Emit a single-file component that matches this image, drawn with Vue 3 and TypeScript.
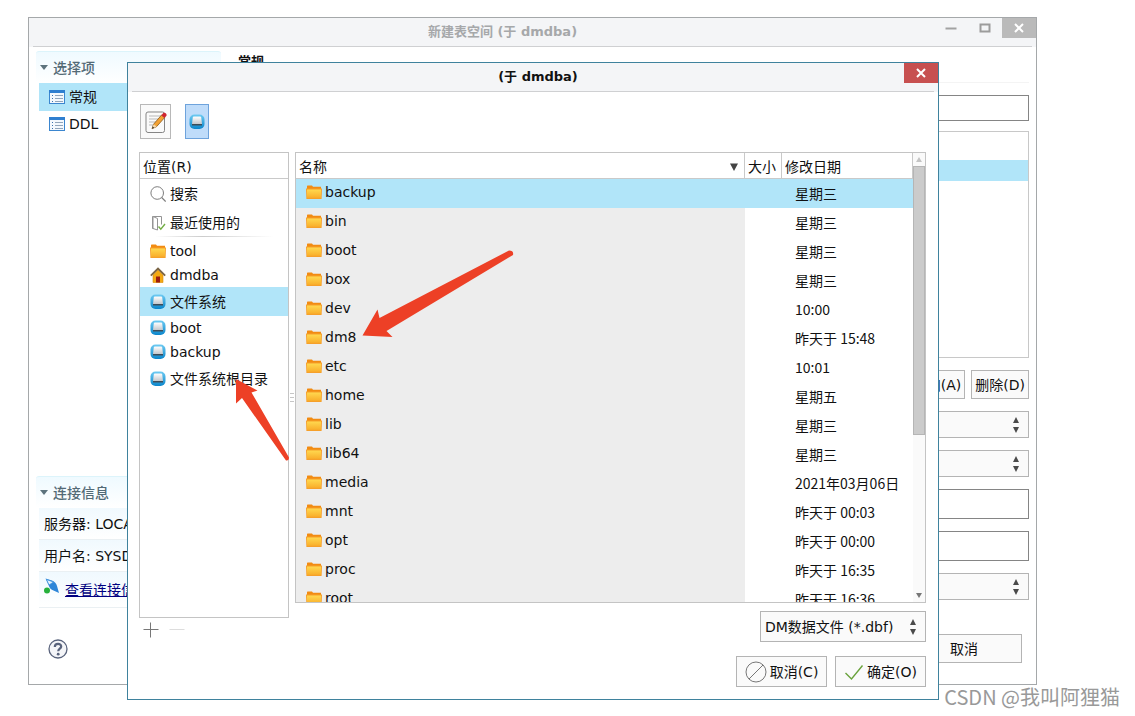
<script setup lang="ts">
import { ref } from 'vue'

interface Place {
  name: string
  icon: 'search' | 'recent' | 'folder' | 'home' | 'disk'
  tall: boolean
}

interface Entry {
  name: string
  modified: string
}

const pages = ['常规', 'DDL']
const currentPage = ref('常规')

const places: Place[] = [
  { name: '搜索', icon: 'search', tall: true },
  { name: '最近使用的', icon: 'recent', tall: true },
  { name: 'tool', icon: 'folder', tall: false },
  { name: 'dmdba', icon: 'home', tall: false },
  { name: '文件系统', icon: 'disk', tall: true },
  { name: 'boot', icon: 'disk', tall: false },
  { name: 'backup', icon: 'disk', tall: false },
  { name: '文件系统根目录', icon: 'disk', tall: true },
]
const currentPlace = ref('文件系统')

const entries: Entry[] = [
  { name: 'backup', modified: '星期三' },
  { name: 'bin', modified: '星期三' },
  { name: 'boot', modified: '星期三' },
  { name: 'box', modified: '星期三' },
  { name: 'dev', modified: '10:00' },
  { name: 'dm8', modified: '昨天于 15:48' },
  { name: 'etc', modified: '10:01' },
  { name: 'home', modified: '星期五' },
  { name: 'lib', modified: '星期三' },
  { name: 'lib64', modified: '星期三' },
  { name: 'media', modified: '2021年03月06日' },
  { name: 'mnt', modified: '昨天于 00:03' },
  { name: 'opt', modified: '昨天于 00:00' },
  { name: 'proc', modified: '昨天于 16:35' },
  { name: 'root', modified: '昨天于 16:36' },
]
const currentEntry = ref('backup')
</script>

<template>
  <div class="desktop">
    <svg class="defs" width="0" height="0" aria-hidden="true">
      <defs>
        <linearGradient id="gFolder" x1="0" y1="0" x2="0" y2="1">
          <stop offset="0" stop-color="#ffd84f" />
          <stop offset="1" stop-color="#f9ae2b" />
        </linearGradient>
        <linearGradient id="gDisk" x1="0" y1="0" x2="0" y2="1">
          <stop offset="0" stop-color="#6fcbf2" />
          <stop offset="1" stop-color="#0a86cc" />
        </linearGradient>
        <linearGradient id="gPlate" x1="0" y1="0" x2="0" y2="1">
          <stop offset="0" stop-color="#ffffff" />
          <stop offset="1" stop-color="#c3c7cc" />
        </linearGradient>
        <symbol id="folder" viewBox="0 0 16 14">
          <path d="M1 5V1.200Q1 .5 1.700.5H6l1 1.300h8V5z" fill="#f28b12" />
          <path d="M0 3.500h16l-.4 10.500H.4z" fill="#f6a02a" />
          <path d="M1 4.500h14v8.300H1z" fill="url(#gFolder)" />
        </symbol>
        <symbol id="disk" viewBox="0 0 16 16">
          <rect x="0.500" y="0.500" width="15" height="14.500" rx="5" fill="url(#gDisk)" />
          <path d="M4.800 2.500h6.400q.8 0 1 .8L13 10H3l.8-6.700q.2-.8 1-.8z" fill="url(#gPlate)" />
          <path d="M3 10h10v1.500H3z" fill="#3c4c58" />
        </symbol>
        <symbol id="home" viewBox="0 0 16 16">
          <path d="M3 8l5-5 5 5v7.500H3z" fill="#f3a913" stroke="#d98c0a" stroke-width="0.600" />
          <path d="M6 9.500h4v6H6z" fill="#9c1c10" />
          <path d="M0.800 8.700L8 1.600l7.200 7.100" fill="none" stroke="#7a6546" stroke-width="1.800" />
        </symbol>
        <symbol id="search" viewBox="0 0 16 16">
          <circle cx="7.200" cy="7" r="6.300" fill="none" stroke="#7d7d7d" />
          <path d="M11.700 11.500l4 4" stroke="#7d7d7d" stroke-width="1.200" />
        </symbol>
        <symbol id="recent" viewBox="0 0 16 16">
          <path d="M2.500 1.500h9v8M2.500 1.500v12h3" fill="none" stroke="#949494" />
          <path d="M3 1.500l4.500 2v11.500L3 13.500z" fill="#fff" stroke="#949494" />
          <path d="M8.500 11.500l2.300 2.700 4.200-5.200" fill="none" stroke="#74ad45" stroke-width="1.400" />
        </symbol>
        <symbol id="page" viewBox="0 0 16 14">
          <rect x="0.500" y="0.500" width="15" height="13" fill="#f4f8fd" stroke="#3b86cf" />
          <path d="M0 0h16v3H0z" fill="#2f7fd0" />
          <path d="M3 5.500h1M3 8.500h1M3 11.500h1" stroke="#3b72ad" />
          <path d="M6 5.500h8M6 8.500h8M6 11.500h8" stroke="#91a5bb" />
        </symbol>
        <symbol id="spin" viewBox="0 0 8 18">
          <path d="M4 1l3 6H1zM4 17l3-6H1z" fill="#4a4a4a" />
        </symbol>
      </defs>
    </svg>

    <section class="window parent" aria-label="新建表空间">
      <header class="titlebar">
        <h1 class="title dim">新建表空间 (于 dmdba)</h1>
        <div class="controls">
          <button class="ctl" type="button" aria-label="最小化">
            <svg width="12" height="12" viewBox="0 0 12 12"><path d="M0.500 6.500h11" stroke="#a2a2a2" stroke-width="2" /></svg>
          </button>
          <button class="ctl" type="button" aria-label="最大化">
            <svg width="12" height="12" viewBox="0 0 12 12"><rect x="1.500" y="2.500" width="9" height="7" fill="none" stroke="#9c9c9c" stroke-width="2" /></svg>
          </button>
          <button class="ctl shut" type="button" aria-label="关闭">
            <svg width="10" height="10" viewBox="0 0 10 10"><path d="M1 1l8 8M9 1L1 9" stroke="#fff" stroke-width="2" /></svg>
          </button>
        </div>
      </header>

      <div class="parent-body">
        <aside class="sidebar">
          <nav>
            <h2 class="group"><svg width="8" height="5" viewBox="0 0 8 5"><path d="M0 0h8L4 5z" fill="#5d737d" /></svg>选择项</h2>
            <button
              v-for="page in pages"
              :key="page"
              type="button"
              class="page"
              :class="{ active: page === currentPage }"
              @click="currentPage = page"
            >
              <svg width="16" height="14"><use href="#page" /></svg>{{ page }}
            </button>
          </nav>
          <div class="connection">
            <h2 class="group"><svg width="8" height="5" viewBox="0 0 8 5"><path d="M0 0h8L4 5z" fill="#5d737d" /></svg>连接信息</h2>
            <p class="info">服务器: LOCALHOST</p>
            <p class="info">用户名: SYSDBA</p>
            <p class="info link">
              <svg width="16" height="16" viewBox="0 0 16 16">
                <path d="M1.500 .5L8 2.500q4 1.500 5 5.500l2 7-5.500-2.500Q6 11.500 4.500 7z" fill="#2e86d8" />
                <path d="M2.500 1.500l2.500 5.500 4.500-3z" fill="#e6f2fc" stroke="#3e92dc" stroke-width="0.800" />
                <circle cx="3" cy="12.500" r="3" fill="#25b03c" />
              </svg>
              <a href="#connection">查看连接信息</a>
            </p>
          </div>
        </aside>

        <form class="settings" @submit.prevent>
          <h2 class="heading">常规</h2>
          <input class="field" type="text" aria-label="表空间名" />
          <div class="grid-box"><div class="grid-row"></div></div>
          <div class="row-actions">
            <button class="btn" type="button">添加(A)</button>
            <button class="btn" type="button">删除(D)</button>
          </div>
          <span class="pick"><select aria-label="缓冲区"><option></option></select><svg width="8" height="18"><use href="#spin" /></svg></span>
          <span class="pick"><select aria-label="加密算法"><option></option></select><svg width="8" height="18"><use href="#spin" /></svg></span>
          <input class="field tall" type="password" aria-label="密码" />
          <input class="field tall" type="text" aria-label="副本数" />
          <span class="pick"><select aria-label="区块策略"><option></option></select><svg width="8" height="18"><use href="#spin" /></svg></span>
        </form>
      </div>

      <footer class="parent-foot">
        <button class="help" type="button" aria-label="帮助">
          <svg width="20" height="20" viewBox="0 0 20 20">
            <circle cx="10" cy="10" r="9" fill="#f4f5f8" stroke="#59637c" stroke-width="1.300" />
            <path d="M6.800 8c0-4.200 6.600-4 6.400-.4-.1 2-3 2.200-3 4.600" fill="none" stroke="#59637c" stroke-width="2.200" />
            <circle cx="10.200" cy="15.200" r="1.400" fill="#59637c" />
          </svg>
        </button>
        <button class="btn wide" type="button">取消</button>
      </footer>
    </section>

    <section class="window dialog" role="dialog" aria-label="选择文件">
      <header class="titlebar">
        <h1 class="title">(于 dmdba)</h1>
        <div class="controls">
          <button class="ctl red" type="button" aria-label="关闭对话框">
            <svg width="10" height="10" viewBox="0 0 10 10"><path d="M1 1l8 8M9 1L1 9" stroke="#fff" stroke-width="2" /></svg>
          </button>
        </div>
      </header>

      <div class="toolbar">
        <button class="tool" type="button" aria-label="输入文件名">
          <svg width="24" height="24" viewBox="0 0 24 24">
            <rect x="2" y="2" width="18.500" height="20.500" rx="2" fill="#fafafa" stroke="#858585" />
            <path d="M5 6h12M5 9h9M5 12h7M5 15h5" stroke="#b9b9b9" />
            <path d="M8 18.800l1.600-4.600L17.600 5l3 2.600-8 9z" fill="#f3a233" stroke="#8a5512" stroke-width="0.800" />
            <path d="M8 18.800l1.600-4.600 3 2.400z" fill="#f4d9ac" />
            <path d="M8 18.800l.7-2.200 1.400 1.200z" fill="#222" />
            <path d="M17.300 5.300l2-2.300c1.600-1 4 1 3.200 2.700l-2 2.300z" fill="#cf2530" />
          </svg>
        </button>
        <button class="tool pressed" type="button" aria-label="文件系统位置">
          <svg width="16" height="16"><use href="#disk" /></svg>
        </button>
      </div>

      <div class="panes">
        <div class="left">
          <div class="places">
            <h2 class="places-head">位置(R)</h2>
            <ul>
              <li v-for="place in places" :key="place.name">
                <button
                  type="button"
                  class="place"
                  :class="{ tall: place.tall, active: place.name === currentPlace, ruled: place.icon === 'recent' }"
                  @click="currentPlace = place.name"
                >
                  <svg width="16" height="16"><use :href="'#' + place.icon" /></svg>{{ place.name }}
                </button>
              </li>
            </ul>
          </div>
          <div class="place-tools">
            <button type="button" aria-label="添加书签"><svg width="16" height="16" viewBox="0 0 16 16"><path d="M0.500 7.500h15M7.500 0.500v15" stroke="#777" /></svg></button>
            <button type="button" aria-label="移除书签"><svg width="16" height="16" viewBox="0 0 16 16"><path d="M0.500 7.500h15" stroke="#ddd" /></svg></button>
          </div>
        </div>

        <div class="grip" aria-hidden="true"><i></i><i></i><i></i></div>

        <div class="right">
          <div class="files">
            <div class="viewport">
              <table>
                <thead>
                  <tr>
                    <th class="c-name" scope="col">
                      <span class="sort">名称<svg width="8" height="8" viewBox="0 0 8 8"><path d="M0 0.500h8L4 8z" fill="#444" /></svg></span>
                    </th>
                    <th class="c-size" scope="col">大小</th>
                    <th class="c-date" scope="col">修改日期</th>
                  </tr>
                </thead>
                <tbody>
                  <tr
                    v-for="entry in entries"
                    :key="entry.name"
                    :class="{ active: entry.name === currentEntry }"
                    @click="currentEntry = entry.name"
                  >
                    <td class="name"><span><svg width="16" height="14"><use href="#folder" /></svg>{{ entry.name }}</span></td>
                    <td></td>
                    <td class="date">{{ entry.modified }}</td>
                  </tr>
                </tbody>
              </table>
            </div>
            <div class="scroll" aria-hidden="true">
              <svg width="12" height="13" viewBox="0 0 12 13"><path d="M6 4l3 5H3z" fill="#c4c4c4" /></svg>
              <div class="thumb"></div>
              <svg width="12" height="13" viewBox="0 0 12 13"><path d="M6 9l3-5H3z" fill="#777" /></svg>
            </div>
          </div>
          <span class="pick filter">
            <select aria-label="文件类型"><option>DM数据文件 (*.dbf)</option></select>
            <svg width="8" height="18"><use href="#spin" /></svg>
          </span>
        </div>
      </div>

      <footer class="actions">
        <button class="btn icon" type="button">
          <svg width="22" height="22" viewBox="0 0 22 22"><circle cx="11" cy="11" r="10" fill="none" stroke="#777" /><path d="M4 18L18 4" stroke="#777" /></svg>取消(C)
        </button>
        <button class="btn icon" type="button">
          <svg width="20" height="20" viewBox="0 0 20 20"><path d="M1.500 11l6 6L18.500 3.500" fill="none" stroke="#69a23c" stroke-width="1.400" /></svg>确定(O)
        </button>
      </footer>
    </section>

    <svg class="marks" width="520" height="470" viewBox="0 0 520 470" aria-hidden="true">
      <path d="M362.500 335.500L377.500 309.500L379.500 318L509 250.500Q514 250.500 513 255L386.500 331L392.500 337z" fill="#ed4026" />
      <path d="M236 379L257.500 390.500L251.500 392.500L289 457.500Q289 461 286 460.500L242 398L236 403.500z" fill="#ed4026" />
    </svg>

    <p class="watermark">CSDN @我叫阿狸猫</p>
  </div>
</template>

<style>
body {
  background: #fff;
}
</style>

<style scoped>
.desktop {
  position: relative;
  min-height: 100vh;
  overflow: hidden;
  background: #fff;
  color: #111;
  font: 14px/20px "DejaVu Sans", "Noto Sans CJK SC", sans-serif;
}
.desktop * {
  box-sizing: border-box;
}
.defs {
  position: absolute;
}
h1, h2, p, ul {
  margin: 0;
  padding: 0;
}
ul {
  list-style: none;
}
button, input, select {
  margin: 0;
  padding: 0;
  border: 0;
  border-radius: 0;
  background: none;
  color: inherit;
  font: inherit;
}
svg {
  flex: none;
  display: block;
}

.window {
  position: absolute;
  background: #fff;
  display: flex;
  flex-direction: column;
}
.parent {
  left: 28px;
  right: 98px;
  top: 17px;
  border: 1px solid #a5a8aa;
}
.dialog {
  left: 127px;
  right: 196px;
  top: 62px;
  border: 1px solid #3f829d;
  padding-bottom: 12px;
}

.titlebar {
  display: grid;
  grid-template-columns: 1fr;
  height: 29px;
  background: linear-gradient(#cfd0d2, #cfd0d2) 4px 28px / calc(100% - 8px) 1px no-repeat #f4f5f7;
}
.titlebar > * {
  grid-area: 1 / 1;
}
.title {
  padding-left: 10px;
  font-size: 13px;
  line-height: 28px;
  font-weight: 700;
  text-align: center;
}
.dim {
  padding: 0 60px 0 0;
  color: #a6a8aa;
}
.controls {
  justify-self: end;
  display: flex;
  height: 20px;
}
.ctl {
  width: 34px;
  display: flex;
  align-items: center;
  justify-content: center;
}
.shut {
  background: #bababa;
}
.red {
  background: #c75050;
}

.parent-body {
  display: grid;
  grid-template-columns: 185px 1fr;
  gap: 17px;
  padding: 4px 7px 0;
}
.sidebar {
  display: flex;
  flex-direction: column;
  justify-content: space-between;
}
.group {
  display: flex;
  align-items: center;
  gap: 5px;
  height: 32px;
  padding-left: 4px;
  border-top: 1px solid #dcf4fb;
  border-radius: 3px;
  background: linear-gradient(#effaff, #fff);
  font-size: 14px;
  font-weight: 500;
  color: #536a76;
}
.page {
  display: flex;
  align-items: center;
  gap: 4px;
  width: calc(100% - 3px);
  height: 25px;
  margin-left: 3px;
  padding-left: 10px;
}
.page.active {
  height: 28px;
  background: #b1e5f9;
}
.info {
  height: 32px;
  margin-left: 3px;
  padding: 6px 0 0 5px;
  border-bottom: 1px solid #eaf0f3;
  background: linear-gradient(#f0f9fe, #fff);
  white-space: nowrap;
  overflow: hidden;
}
.link {
  display: flex;
  gap: 5px;
  height: 36px;
}
.link a {
  line-height: 24px;
  color: #000080;
}

.settings {
  display: flex;
  flex-direction: column;
  gap: 12px;
  padding: 1px 0 8px;
}
.heading {
  height: 31px;
  border-bottom: 1px solid #f4f4f4;
  font-size: 13px;
  line-height: 20px;
  font-weight: 700;
}
.field {
  width: 100%;
  height: 26px;
  padding: 0 6px;
  border: 1px solid #858585;
  background: #fff;
}
.field.tall {
  height: 30px;
}
.grid-box {
  height: 227px;
  margin-top: -2px;
  padding-top: 28px;
  border: 1px solid #c8c8c8;
}
.grid-row {
  height: 21px;
  background: #b1e5f9;
}
.row-actions {
  display: flex;
  justify-content: flex-end;
  gap: 6px;
}
.btn {
  height: 29px;
  padding: 0 3px;
  border: 1px solid #b4b4b4;
  background: #fafafa;
  white-space: nowrap;
}
.pick {
  display: grid;
  align-items: center;
  height: 27px;
}
.pick > * {
  grid-area: 1 / 1;
}
.pick select {
  appearance: none;
  width: 100%;
  height: 100%;
  padding-left: 4px;
  border: 1px solid #b4b4b4;
  background: #fafafa;
}
.pick svg {
  justify-self: end;
  margin-right: 9px;
  pointer-events: none;
}
.parent-foot {
  display: flex;
  align-items: center;
  justify-content: space-between;
  padding: 26px 14px 21px 19px;
}
.btn.wide {
  width: 116px;
}

.toolbar {
  display: flex;
  gap: 14px;
  padding: 12px 12px 13px;
}
.tool {
  display: flex;
  align-items: center;
  justify-content: center;
  width: 31px;
  height: 35px;
  border: 1px solid #b8b8b8;
  background: #fafafa;
}
.tool.pressed {
  width: 24px;
  border-color: #6ea3dc;
  background: #bfdcfa;
}
.panes {
  display: grid;
  grid-template-columns: 150px 6px 1fr;
  padding: 0 12px 0 11px;
}
.places {
  height: 466px;
  border: 1px solid #c4c4c4;
}
.places-head {
  height: 26px;
  padding-left: 3px;
  border-bottom: 1px solid #c9c9c9;
  font-size: 14px;
  line-height: 28px;
  font-weight: 400;
}
.place {
  display: flex;
  align-items: center;
  gap: 4px;
  width: 100%;
  height: 24px;
  padding-left: 10px;
  text-align: left;
}
.place.tall {
  height: 29px;
}
.place.ruled {
  margin-bottom: 2px;
  background: linear-gradient(90deg, #fff, #ccc 40%, #fff) 50% 100% / 80% 1px no-repeat;
}
.place.active {
  background: #b1e5f9;
}
.place-tools {
  display: flex;
  gap: 10px;
  padding: 4px 4px 0;
}
.grip {
  display: flex;
  flex-direction: column;
  gap: 3px;
  padding: 241px 1px 0;
}
.grip i {
  height: 1px;
  background: #c6c6c6;
}
.right {
  display: flex;
  flex-direction: column;
  align-items: flex-end;
  gap: 8px;
}
.files {
  display: flex;
  width: 100%;
  height: 451px;
  border: 1px solid #c4c4c4;
}
.viewport {
  flex: 1;
  min-width: 0;
  overflow: hidden;
}
table {
  width: 100%;
  border-collapse: separate;
  border-spacing: 0;
  table-layout: fixed;
}
th {
  height: 26px;
  padding: 2px 3px 0;
  border-right: 1px solid #c9c9c9;
  border-bottom: 1px solid #c9c9c9;
  font-weight: 400;
  text-align: left;
}
.c-size {
  width: 37px;
}
.c-date {
  width: 131px;
}
.sort {
  display: flex;
  align-items: center;
  justify-content: space-between;
  padding-right: 3px;
}
td {
  height: 29px;
  padding: 0;
}
.name {
  background: #ededed;
}
.name span {
  display: flex;
  align-items: center;
  gap: 3px;
  padding: 0 0 4px 10px;
}
.date {
  padding: 0 0 1px 13px;
  font-family: "Noto Sans CJK SC", sans-serif;
  white-space: nowrap;
}
.active td {
  background: #b1e5f9;
}
.scroll {
  display: flex;
  flex-direction: column;
  width: 12px;
  background: #fafafa;
}
.thumb {
  height: 269px;
  margin-bottom: auto;
  border: 1px solid #b5b5b5;
  background: #cbcbcb;
}
.filter {
  width: 166px;
  height: 31px;
}
.actions {
  display: flex;
  justify-content: flex-end;
  gap: 8px;
  padding: 14px 12px 0;
}
.btn.icon {
  display: flex;
  align-items: center;
  justify-content: center;
  gap: 3px;
  width: 91px;
  height: 31px;
}

.marks {
  position: absolute;
  left: 0;
  top: 0;
  pointer-events: none;
}
.watermark {
  position: absolute;
  right: 15px;
  bottom: 6px;
  font: 20px/26px "Noto Sans CJK SC", sans-serif;
  color: #999;
}
</style>
